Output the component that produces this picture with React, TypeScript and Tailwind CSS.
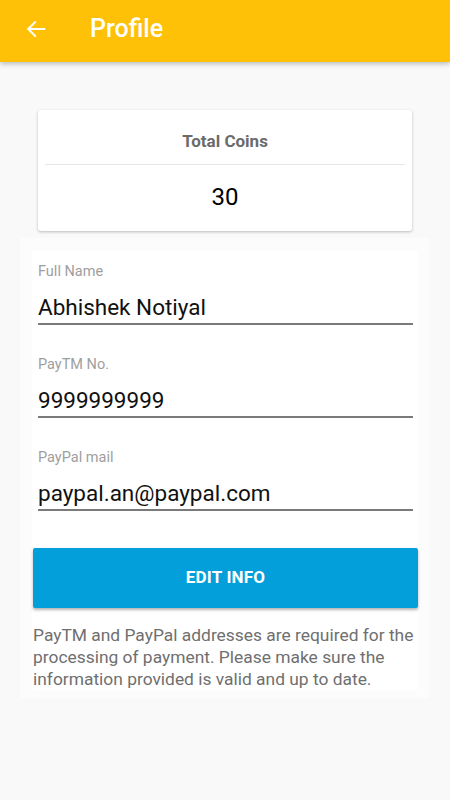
import React from "react";

function Field({ label, value }: { label: string; value: string }) {
  return (
    <div className="flex flex-col">
      <div className="h-[16px] text-[14.5px] leading-[16px] text-[#9e9e9e]">{label}</div>
      <div className="mt-[13px] h-[28px] text-[22.5px] leading-[28px] text-[#111]">{value}</div>
      <div className="mt-[2px] h-[1.5px] bg-[#7a7a7a]" />
    </div>
  );
}

export default function App() {
  return (
    <div className="min-h-[800px] w-[450px] bg-[#f9f9f9]" style={{ fontFamily: "Roboto, 'Noto Sans', sans-serif" }}>
      <div className="relative z-10 flex h-[62px] items-center bg-[#ffc107] shadow-[0_2px_5px_rgba(0,0,0,0.25)]">
        <div className="ml-[24px] -mt-[4px] flex h-[24px] w-[24px] items-center justify-center">
          <svg width="22" height="22" viewBox="0 0 24 24" fill="none" stroke="white" strokeWidth="2.2" strokeLinecap="square">
            <path d="M21 12H4" />
            <path d="M11 4.5L3.5 12L11 19.5" />
          </svg>
        </div>
        <div className="ml-[42px] -mt-[4px] text-[25px] font-medium leading-[28px] text-white">Profile</div>
      </div>

      <div className="mx-[38px] mt-[48px] flex h-[121px] flex-col rounded-[3px] bg-white shadow-[0_1px_3px_rgba(0,0,0,0.25)]">
        <div className="mt-[21px] h-[20px] text-center text-[17px] font-bold leading-[20px] text-[#6b6b6b]">Total Coins</div>
        <div className="mx-[7px] mt-[13px] h-px bg-[#e6e6e6]" />
        <div className="mt-[17px] h-[30px] text-center text-[24px] leading-[30px] text-black">30</div>
      </div>

      <div className="mx-[20px] mt-[7px] bg-[#fcfcfc] px-[12px] pb-[8px] pt-[12px]">
        <div className="flex flex-col rounded-[3px] bg-white pt-[14px]">
          <div className="flex flex-col gap-[32.5px] pl-[6px] pr-[5px]">
            <Field label="Full Name" value="Abhishek Notiyal" />
            <Field label="PayTM No." value="9999999999" />
            <Field label="PayPal mail" value="paypal.an@paypal.com" />
          </div>
          <div className="ml-[1px] mt-[37px] flex h-[60px] items-center justify-center rounded-[2px] bg-[#029fdb] shadow-[0_2px_3px_rgba(0,0,0,0.3)]">
            <span className="text-[17px] font-bold tracking-[0.2px] text-white">EDIT INFO</span>
          </div>
          <p className="ml-[1px] mt-[16px] text-[17.4px] leading-[22px] text-[#6f6f6f]">
            PayTM and PayPal addresses are required for the processing of payment. Please make sure the information provided is valid and up to date.
          </p>
        </div>
      </div>
    </div>
  );
}
